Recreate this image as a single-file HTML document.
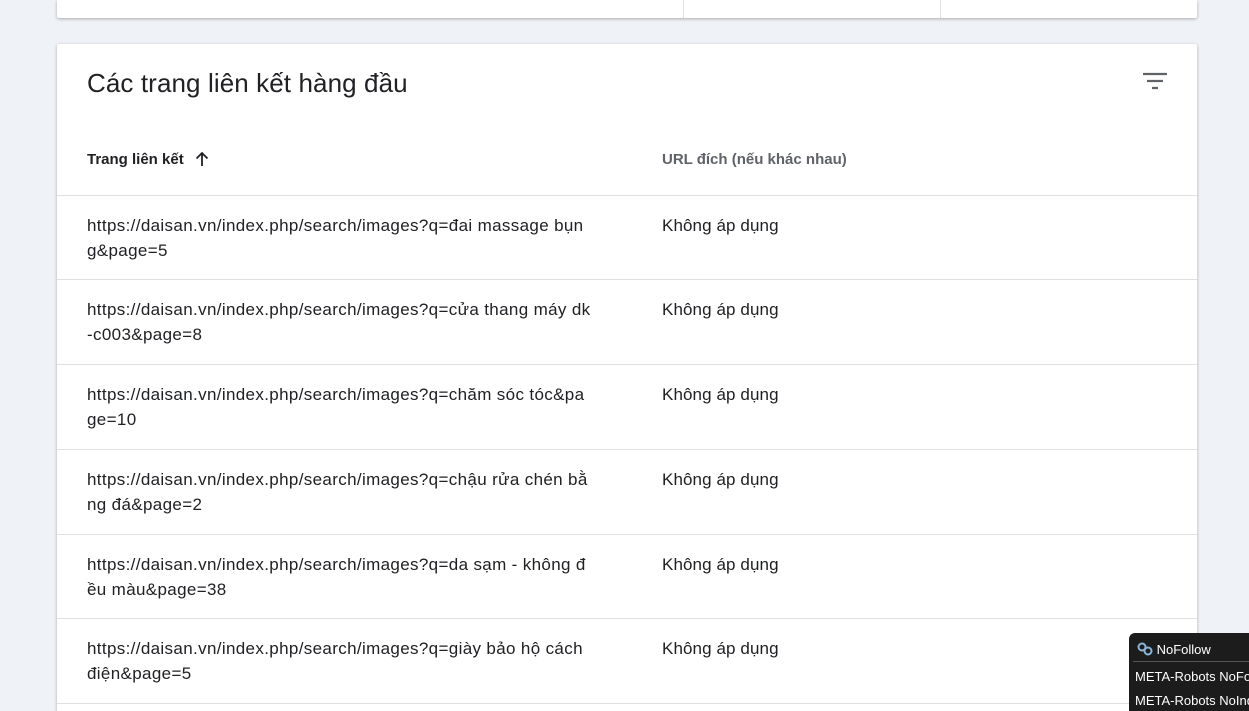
<!DOCTYPE html>
<html style="height:711px;overflow:hidden"><head><meta charset="utf-8"><style>
body{margin:0;width:1249px;height:711px;overflow:hidden;background:#eff2f7;font-family:"Liberation Sans",Roboto,sans-serif;color:#202124;position:relative}
.card{position:absolute;left:57px;width:1140px;background:#fff;border-radius:2px;box-shadow:0 1px 3px rgba(0,0,0,.3)}
.top{top:0;height:18px;border-radius:0 0 2px 2px}
.top i{position:absolute;top:0;bottom:0;width:1px;background:#e0e0e0}
.main{top:44px;height:667px;border-radius:2px 2px 0 0;overflow:hidden}
h1{position:absolute;left:30px;top:24px;margin:0;font-weight:400;font-size:26px;letter-spacing:0.1px}
.th{position:absolute;top:107px;font-size:15px;font-weight:bold}
.row{position:absolute;left:0;width:1140px;height:84px;border-top:1px solid #e0e0e0}
.row .a{position:absolute;left:30px;top:17px;width:505px;font-size:17px;line-height:25px;letter-spacing:0.35px;word-break:break-all}
.row .b{position:absolute;left:605px;top:17px;font-size:17px;line-height:25px;letter-spacing:0.1px}
.pop{position:absolute;left:1129px;top:633px;width:120px;height:78px;background:#1c1c1c;border-radius:6px 0 0 0;color:#fff;font-size:13px;overflow:hidden}
</style></head><body>
<div class="card top"><i style="left:626px"></i><i style="left:883px"></i></div>
<div class="card main">
<h1>Các trang liên kết hàng đầu</h1>
<svg style="position:absolute;left:1086px;top:28px" width="24" height="18" viewBox="0 0 24 18"><path d="M0 2h24M4 9h16M9 16h6" stroke="#5f6368" stroke-width="2.2"/></svg>
<div class="th" style="left:30px;color:#202124">Trang liên kết <svg width="16" height="16" viewBox="0 0 16 16" style="vertical-align:-3px;margin-left:6px"><path d="M8 15V2M2.5 7.5L8 2l5.5 5.5" stroke="#202124" stroke-width="1.8" fill="none"/></svg></div>
<div class="th" style="left:605px;color:#5f6368">URL đích (nếu khác nhau)</div>
<div class="row" style="top:151px"><div class="a">https://daisan.vn/index.php/search/images?q=đai massage bụng&amp;page=5</div><div class="b">Không áp dụng</div></div>
<div class="row" style="top:235px"><div class="a">https://daisan.vn/index.php/search/images?q=cửa thang máy dk-c003&amp;page=8</div><div class="b">Không áp dụng</div></div>
<div class="row" style="top:320px"><div class="a">https://daisan.vn/index.php/search/images?q=chăm sóc tóc&amp;page=10</div><div class="b">Không áp dụng</div></div>
<div class="row" style="top:405px"><div class="a">https://daisan.vn/index.php/search/images?q=chậu rửa chén bằng đá&amp;page=2</div><div class="b">Không áp dụng</div></div>
<div class="row" style="top:490px"><div class="a">https://daisan.vn/index.php/search/images?q=da sạm - không đều màu&amp;page=38</div><div class="b">Không áp dụng</div></div>
<div class="row" style="top:574px"><div class="a">https://daisan.vn/index.php/search/images?q=giày bảo hộ cách điện&amp;page=5</div><div class="b">Không áp dụng</div></div>
<div class="row" style="top:659px;height:7px"></div>
</div>
<div class="pop">
<div style="position:absolute;left:8px;top:9px;white-space:nowrap"><svg width="16" height="14" viewBox="0 0 16 14" style="vertical-align:-2px"><circle cx="5" cy="5" r="3.5" fill="none" stroke="#8ab4d8" stroke-width="2"/><circle cx="11" cy="9" r="3.5" fill="none" stroke="#8ab4d8" stroke-width="2"/></svg> NoFollow</div>
<div style="position:absolute;left:4px;top:28px;width:120px;height:1px;background:#555"></div>
<div style="position:absolute;left:6px;top:36px;white-space:nowrap">META-Robots NoFollow</div>
<div style="position:absolute;left:6px;top:60px;white-space:nowrap">META-Robots NoIndex</div>
</div>
</body></html>
